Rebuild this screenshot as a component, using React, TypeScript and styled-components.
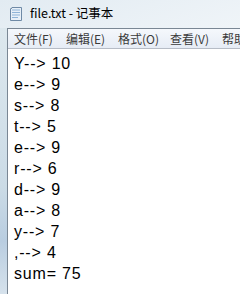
import React from "react"
import styled, { createGlobalStyle } from "styled-components"

const lines = ["Y--> 10", "e--> 9", "s--> 8", "t--> 5", "e--> 9", "r--> 6", "d--> 9", "a--> 8", "y--> 7", ",--> 4", "sum= 75"]
const menus = ["文件(F)", "编辑(E)", "格式(O)", "查看(V)", "帮助(H)"]

const NotepadIcon = () => (
  <svg width="14" height="16" viewBox="0 0 14 16">
    <path d="M3 1.5h9.5v13H1.5V3z" fill="#e8f0f8" stroke="#6f8aa6" />
    <path d="M3 4h8M3 6.5h8M3 9h8M3 11.5h6" stroke="#8fb4d8" strokeWidth="1" />
    <path d="M1.5 3L3 1.5V3z" fill="#6f8aa6" />
  </svg>
)

export default function App() {
  return (
    <>
      <GlobalStyle />
      <Window>
        <TitleBar>
          <NotepadIcon />
          <Title>file.txt - 记事本</Title>
        </TitleBar>
        <Body>
          <Frame />
          <Client>
            <MenuBar>
              {menus.map((m) => (
                <MenuItem key={m}>{m}</MenuItem>
              ))}
            </MenuBar>
            <Editor>
              {lines.map((l, i) => (
                <Line key={i}>{l}</Line>
              ))}
            </Editor>
          </Client>
        </Body>
      </Window>
    </>
  )
}

const GlobalStyle = createGlobalStyle`
  html, body {
    margin: 0;
    padding: 0;
    overflow: hidden;
  }
`
const Window = styled.div`
  width: 240px;
  height: 294px;
  display: flex;
  flex-direction: column;
  background: linear-gradient(160deg, #e2ebf2 0%, #f6f9fb 45%, #dde8ef 100%);
  overflow: hidden;
`
const TitleBar = styled.div`
  height: 28px;
  display: flex;
  align-items: center;
  gap: 7px;
  padding: 0 0 1px 9px;
  box-sizing: border-box;
  flex-shrink: 0;
`
const Title = styled.span`
  font-family: "Noto Sans CJK SC", "Liberation Sans", sans-serif;
  font-size: 12.5px;
  color: #000;
  line-height: 1;
`
const Body = styled.div`
  flex: 1;
  display: flex;
  min-height: 0;
`
const Frame = styled.div`
  width: 7px;
  flex-shrink: 0;
  background: linear-gradient(180deg, #dde8ee 0%, #cbdbe6 60%, #b9cde0 80%, #d6e2ec 100%);
`
const Client = styled.div`
  flex: 1;
  display: flex;
  flex-direction: column;
  border-left: 1px solid #7a8794;
  border-top: 1px solid #7a8794;
`
const MenuBar = styled.div`
  height: 19px;
  display: flex;
  align-items: center;
  padding-left: 6px;
  background: linear-gradient(180deg, #f5f8fc 0%, #e6ecf5 100%);
  border-bottom: 1px solid #b6bcc6;
  white-space: nowrap;
  overflow: hidden;
`
const MenuItem = styled.span`
  width: 52px;
  flex-shrink: 0;
  font-family: "Noto Sans CJK SC", "Liberation Sans", sans-serif;
  font-size: 12px;
  color: #3a3a3a;
  line-height: 1;
`
const Editor = styled.div`
  flex: 1;
  background: #fff;
  padding: 4px 0 0 6px;
`
const Line = styled.div`
  font-family: "Liberation Sans", Arial, sans-serif;
  font-size: 16px;
  letter-spacing: 0.8px;
  line-height: 21px;
  color: #000;
  white-space: pre;
`
